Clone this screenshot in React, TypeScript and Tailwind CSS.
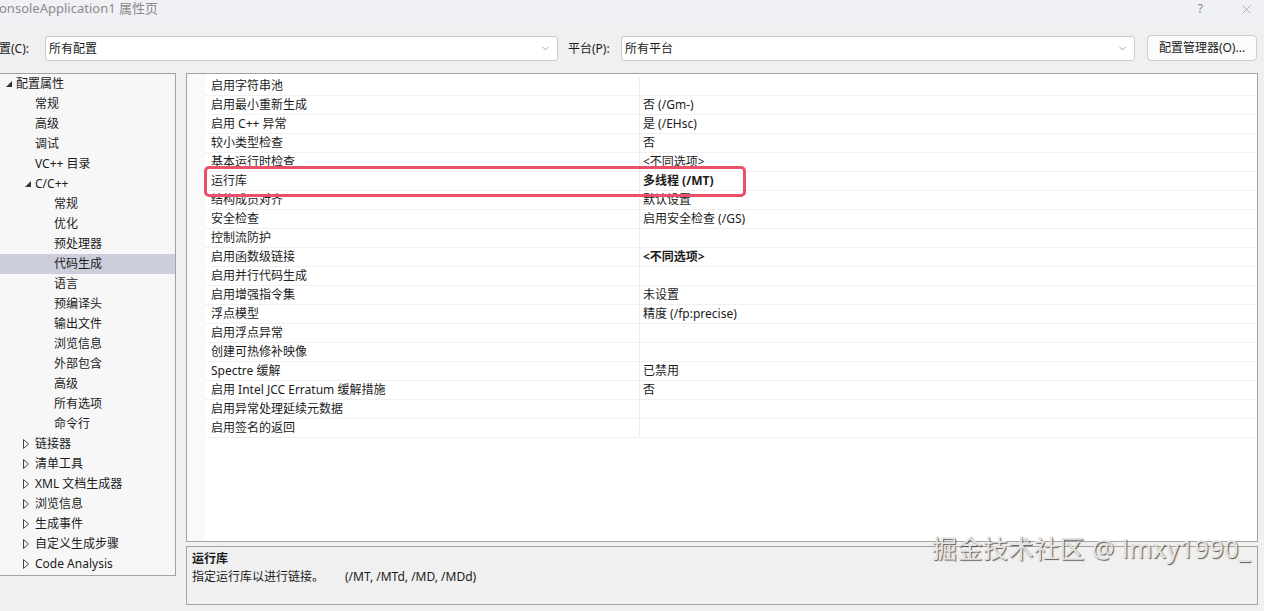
import { X, ChevronDown } from "lucide-react";

type TreeItem = { label: string; level: number; toggle?: "open" | "closed"; selected?: boolean };

const tree: TreeItem[] = [
  { label: "配置属性", level: 0, toggle: "open" },
  { label: "常规", level: 1 },
  { label: "高级", level: 1 },
  { label: "调试", level: 1 },
  { label: "VC++ 目录", level: 1 },
  { label: "C/C++", level: 1, toggle: "open" },
  { label: "常规", level: 2 },
  { label: "优化", level: 2 },
  { label: "预处理器", level: 2 },
  { label: "代码生成", level: 2, selected: true },
  { label: "语言", level: 2 },
  { label: "预编译头", level: 2 },
  { label: "输出文件", level: 2 },
  { label: "浏览信息", level: 2 },
  { label: "外部包含", level: 2 },
  { label: "高级", level: 2 },
  { label: "所有选项", level: 2 },
  { label: "命令行", level: 2 },
  { label: "链接器", level: 1, toggle: "closed" },
  { label: "清单工具", level: 1, toggle: "closed" },
  { label: "XML 文档生成器", level: 1, toggle: "closed" },
  { label: "浏览信息", level: 1, toggle: "closed" },
  { label: "生成事件", level: 1, toggle: "closed" },
  { label: "自定义生成步骤", level: 1, toggle: "closed" },
  { label: "Code Analysis", level: 1, toggle: "closed" },
];

const props: [string, string, boolean?][] = [
  ["启用字符串池", ""],
  ["启用最小重新生成", "否 (/Gm-)"],
  ["启用 C++ 异常", "是 (/EHsc)"],
  ["较小类型检查", "否"],
  ["基本运行时检查", "<不同选项>"],
  ["运行库", "多线程 (/MT)", true],
  ["结构成员对齐", "默认设置"],
  ["安全检查", "启用安全检查 (/GS)"],
  ["控制流防护", ""],
  ["启用函数级链接", "<不同选项>", true],
  ["启用并行代码生成", ""],
  ["启用增强指令集", "未设置"],
  ["浮点模型", "精度 (/fp:precise)"],
  ["启用浮点异常", ""],
  ["创建可热修补映像", ""],
  ["Spectre 缓解", "已禁用"],
  ["启用 Intel JCC Erratum 缓解措施", "否"],
  ["启用异常处理延续元数据", ""],
  ["启用签名的返回", ""],
];

const indent = ["pl-[3px]", "pl-[22px]", "pl-[41px]"];

function Toggle({ kind }: { kind?: "open" | "closed" }) {
  if (kind === "open")
    return (
      <svg width="13" height="8" viewBox="0 0 13 8" className="shrink-0">
        <polygon points="3,7 9,1 9,7" fill="#333" />
      </svg>
    );
  if (kind === "closed")
    return (
      <svg width="13" height="10" viewBox="0 0 13 10" className="shrink-0">
        <polygon points="1.5,0.5 6.5,5 1.5,9.5" fill="none" stroke="#444" strokeWidth="1" />
      </svg>
    );
  return <span className="w-[13px] shrink-0" />;
}

function Select({ value, w }: { value: string; w: string }) {
  return (
    <div className={`${w} h-[25px] bg-white border border-[#c9c9c9] rounded-[3px] flex items-center justify-between pl-[3px] pr-[6px]`}>
      <span>{value}</span>
      <ChevronDown size={11} strokeWidth={1.2} className="text-[#555]" />
    </div>
  );
}

export default function App() {
  return (
    <div
      className="relative w-[1264px] h-[611px] overflow-hidden bg-[#f0f0f0] text-[12px] text-[#1b1b1b]"
      style={{ fontFamily: '"Segoe UI","Noto Sans","Noto Sans CJK SC",sans-serif' }}
    >
      {/* title bar */}
      <div className="h-[28px] bg-[#eff1f4] flex items-center justify-between pr-[10px]">
        <span className="text-[13px] text-[#8c8c8c] ml-[-1px] -mt-[10px]">onsoleApplication1 属性页</span>
        <div className="flex items-center gap-[36px] -mt-[10px] text-[#8a8a8a]">
          <span className="text-[12px]">?</span>
          <X size={15} strokeWidth={1} />
        </div>
      </div>

      {/* toolbar */}
      <div className="h-[45px] flex items-start pt-[8px]">
        <span className="ml-[-13px] w-[58px] leading-[25px]">配置(C):</span>
        <Select value="所有配置" w="w-[513px]" />
        <span className="ml-[10px] w-[53px] leading-[25px]">平台(P):</span>
        <Select value="所有平台" w="w-[514px]" />
        <button className="ml-[12px] w-[110px] h-[26px] -mt-[1px] bg-[#fbfbfb] border border-[#cfcfcf] rounded-[4px] text-[12px]">
          配置管理器(O)...
        </button>
      </div>

      {/* main */}
      <div className="flex items-start gap-[10px]">
        {/* tree */}
        <div className="ml-[-1px] w-[177px] h-[503px] border border-[#a3a3a3] bg-[#f7f7f7]">
          {tree.map((t, i) => (
            <div
              key={i}
              className={`h-[20px] flex items-center ${indent[t.level]} ${t.selected ? "bg-[#cdcedb]" : ""}`}
            >
              <Toggle kind={t.toggle} />
              <span>{t.label}</span>
            </div>
          ))}
        </div>

        {/* right side */}
        <div className="w-[1072px] flex flex-col gap-[4px]">
          <div className="relative h-[469px] border border-[#a3a3a3] bg-white flex">
            <div className="w-[18px] bg-[#f9f9f9]" />
            <div className="flex-1 pt-[3px]">
              {props.map(([name, value, bold], i) => (
                <div key={i} className="h-[19px] flex border-b border-[#f1f1f1]">
                  <div className="w-[435px] pl-[6px] leading-[18px] border-r border-[#ececec] whitespace-nowrap">{name}</div>
                  <div className={`flex-1 pl-[3px] leading-[18px] whitespace-nowrap ${bold ? "font-bold" : ""}`}>{value}</div>
                </div>
              ))}
            </div>
            {/* highlight */}
            <div className="absolute left-[17px] top-[92px] w-[542px] h-[31px] border-[3px] border-[#e9506a] rounded-[5px]" />
          </div>

          <div className="h-[59px] border border-[#a3a3a3] bg-[#f0f0f0] px-[5px] pt-[3px]">
            <div className="font-bold leading-[18px]">运行库</div>
            <div className="leading-[18px] flex">
              <span className="w-[153px]">指定运行库以进行链接。</span>
              <span>(/MT, /MTd, /MD, /MDd)</span>
            </div>
          </div>
        </div>
      </div>

      {/* watermark */}
      <div
        className="absolute left-[932px] top-[530px] text-[25px] tracking-[0.5px] text-[#e4e4e4] whitespace-nowrap [text-shadow:1px_1px_1px_rgba(40,40,40,0.75)]"
        style={{ fontFamily: '"Noto Sans","Noto Sans CJK SC",sans-serif' }}
      >
        掘金技术社区 @ lmxy1990_
      </div>
    </div>
  );
}
